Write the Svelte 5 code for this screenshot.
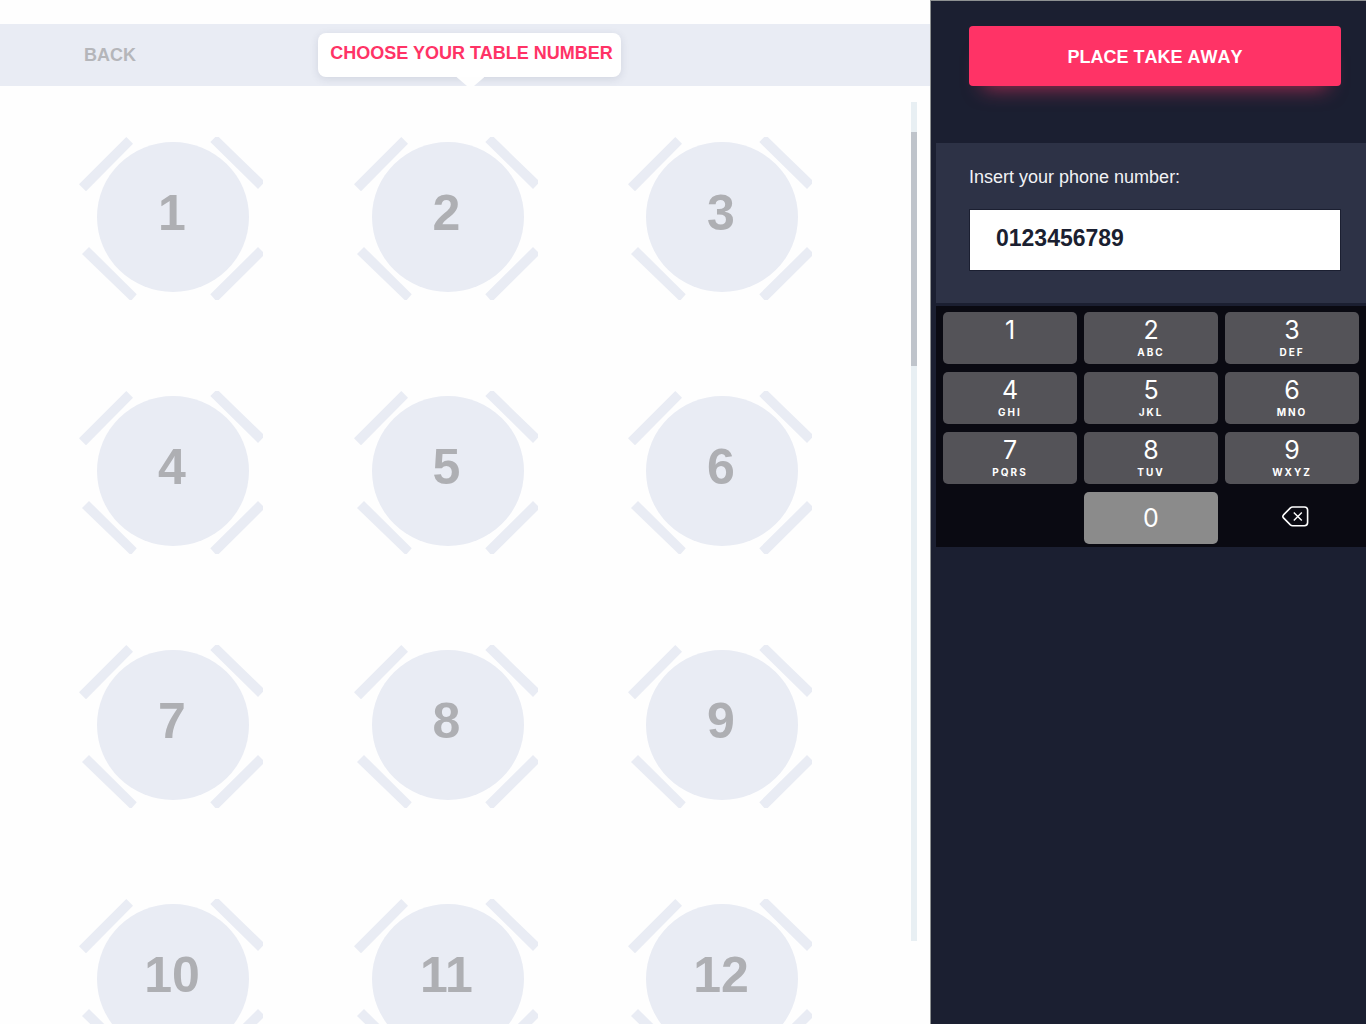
<script>
  const tables = Array.from({ length: 12 }, (_, i) => i + 1);
  const keys = [
    ['1', ''],
    ['2', 'ABC'],
    ['3', 'DEF'],
    ['4', 'GHI'],
    ['5', 'JKL'],
    ['6', 'MNO'],
    ['7', 'PQRS'],
    ['8', 'TUV'],
    ['9', 'WXYZ']
  ];
  let phone = $state('0123456789');
  const press = (digit) => (phone += digit);
  const erase = () => (phone = phone.slice(0, -1));
</script>

<div class="page">
  <main>
    <header>
      <button class="back" type="button">BACK</button>
      <h1>CHOOSE YOUR TABLE NUMBER</h1>
    </header>
    <div class="floor">
      <div class="tables">
        {#each tables as n}
          <button class="table" type="button">
            <svg viewBox="0 0 184 163" aria-hidden="true">
              <ellipse cx="94" cy="80" rx="76" ry="75" />
              <path d="M47.3 0L54 6.7L7 54.3L0 47.3Z" />
              <path d="M131.3 5L136.3 0H139.7L184 43V46.7L179 52Z" />
              <path d="M10 110L3 117L50.7 163H52.7L57.7 157.3Z" />
              <path d="M179 110L184 115V119L139.7 163H136.3L131.3 157.3Z" />
            </svg>
            <span>{n}</span>
          </button>
        {/each}
      </div>
      <div class="track"><div class="thumb"></div></div>
    </div>
  </main>

  <aside>
    <button class="order" type="button">PLACE TAKE AWAY</button>
    <div class="phone">
      <label for="phone">Insert your phone number:</label>
      <input id="phone" type="tel" bind:value={phone} />
    </div>
    <div class="keypad">
      {#each keys as [digit, letters]}
        <button class="key" type="button" onclick={() => press(digit)}>
          <span class="digit">{digit}</span>
          <span class="letters">{letters}</span>
        </button>
      {/each}
      <button class="key zero" type="button" onclick={() => press('0')}>
        <span class="digit">0</span>
      </button>
      <button class="erase" type="button" aria-label="Delete" onclick={erase}>
        <svg viewBox="0 0 27 21" aria-hidden="true">
          <path d="M10.6 1H22.4Q25.6 1 25.6 4.2V16.6Q25.6 19.8 22.4 19.8H10.6Q9.4 19.8 8.4 18.9L1.5 11.9Q.2 10.4 1.5 8.9L8.4 1.9Q9.4 1 10.6 1Z" />
          <path d="M11.8 6.5L19.8 14.5M19.8 6.5L11.8 14.5" />
        </svg>
      </button>
    </div>
  </aside>
</div>

<style>
  :global(body) {
    background: #fefefe;
  }

  .page {
    display: flex;
    height: 100vh;
    overflow: hidden;
    font-family: 'Liberation Sans', Arial, sans-serif;
  }

  button {
    margin: 0;
    padding: 0;
    border: 0;
    background: none;
    font-family: inherit;
    cursor: pointer;
  }

  main {
    flex: 1;
    min-width: 0;
    display: flex;
    flex-direction: column;
    padding-top: 24px;
  }

  header {
    flex: none;
    display: grid;
    grid-template-columns: 1fr auto 1fr;
    align-items: center;
    height: 62px;
    padding-left: 9px;
    background: #e9ecf4;
    overflow: hidden;
  }

  .back {
    justify-self: start;
    margin-left: 75px;
    color: #b5b6ba;
    font-size: 18px;
    font-weight: 700;
    line-height: 24px;
  }

  h1 {
    position: relative;
    margin: 0;
    padding: 8px 8px 12px 12px;
    border-radius: 8px;
    background: #fff;
    box-shadow: 0 2px 8px rgba(40, 50, 80, 0.12);
    color: #ff3366;
    font-size: 18px;
    line-height: 24px;
    white-space: nowrap;
  }

  h1::after {
    content: '';
    position: absolute;
    top: 100%;
    left: 50%;
    width: 28px;
    height: 12px;
    margin-left: -13px;
    background: #fefefe;
    clip-path: polygon(0 0, 100% 0, 50% 100%);
  }

  .floor {
    flex: 1;
    min-height: 0;
    display: flex;
  }

  .tables {
    flex: 1;
    display: grid;
    grid-template-columns: repeat(3, 184px);
    grid-auto-rows: 163px;
    justify-content: space-between;
    row-gap: 91px;
    padding: 51px 99px 0 79px;
  }

  .table {
    display: grid;
    place-items: center;
  }

  .table > * {
    grid-area: 1 / 1;
  }

  .table svg {
    display: block;
    width: 184px;
    height: 163px;
    fill: #e9ecf4;
  }

  .table span {
    padding: 0 0 11px 2px;
    color: #aeafb3;
    font-size: 50px;
    font-weight: 700;
    line-height: 56px;
  }

  .track {
    flex: none;
    width: 6px;
    margin: 16px 13px 83px 0;
    padding-top: 30px;
    box-sizing: border-box;
    background: #e8eff3;
  }

  .thumb {
    height: 234px;
    background: #bfc4cb;
  }

  aside {
    flex: none;
    width: 436px;
    box-sizing: border-box;
    display: flex;
    flex-direction: column;
    padding: 25px 0 0 5px;
    border: solid #8e9192;
    border-width: 1px 0 0 1px;
    background: #1b1f31;
  }

  .order {
    height: 60px;
    margin: 0 25px 57px 33px;
    padding-top: 2px;
    border-radius: 4px;
    background: #ff3366;
    box-shadow: 0 16px 20px -14px rgba(255, 51, 102, 0.6);
    color: #fff;
    font-size: 18px;
    font-weight: 700;
    font-kerning: none;
    line-height: 24px;
  }

  .phone {
    display: flex;
    flex-direction: column;
    gap: 20px;
    margin-bottom: 3px;
    padding: 22px 25px 32px 33px;
    background: #2d3246;
  }

  label {
    color: #f1f2f5;
    font-size: 18px;
    line-height: 24px;
  }

  input {
    height: 62px;
    box-sizing: border-box;
    padding: 0 26px 3px;
    border: 1px solid #1b1f31;
    border-radius: 0;
    background: #fff;
    color: #1b1f31;
    font-family: inherit;
    font-size: 23px;
    font-weight: 700;
    outline: none;
  }

  .keypad {
    display: grid;
    grid-template-columns: repeat(3, 1fr);
    grid-auto-rows: 52px;
    gap: 8px 7px;
    padding: 6px 7px 3px;
    background: #0a0a12;
    font-family: Inter, sans-serif;
  }

  .key {
    display: flex;
    flex-direction: column;
    align-items: center;
    padding-top: 3px;
    border-radius: 5px;
    background: #545358;
    color: #fff;
  }

  .digit {
    font-size: 25px;
    line-height: 30px;
  }

  .letters {
    font-size: 10px;
    font-weight: 700;
    line-height: 14px;
    letter-spacing: 2px;
  }

  .zero {
    grid-column: 2;
    justify-content: center;
    padding-top: 0;
    background: #8b8b8b;
  }

  .erase {
    display: grid;
    place-items: center;
    padding: 0 0 3px 6px;
  }

  .erase svg {
    width: 27px;
    height: 21px;
    fill: none;
    stroke: #fff;
    stroke-width: 1.6;
  }

  .erase path + path {
    stroke-width: 1.4;
  }
</style>
